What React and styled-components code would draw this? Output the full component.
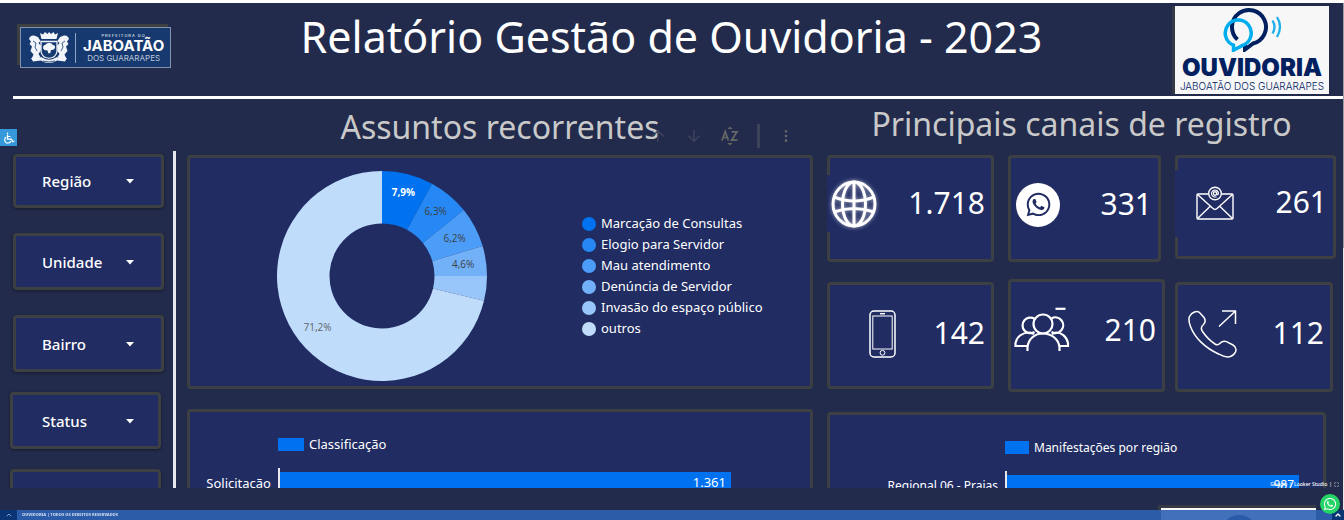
import React from "react"
import styled, { createGlobalStyle } from "styled-components"
import { FaWhatsapp } from "react-icons/fa"
import { ArrowUp, ArrowDown, EllipsisVertical, ChevronUp, Maximize } from "lucide-react"

const slices = [
  { name: "Marcação de Consultas", value: 7.9, color: "#0072f0", label: "7,9%", ink: "#ffffff", reach: 87 },
  { name: "Elogio para Servidor", value: 6.3, color: "#2688f4", label: "6,3%", ink: "#3c4043", reach: 84 },
  { name: "Mau atendimento", value: 6.2, color: "#4c9df7", label: "6,2%", ink: "#3c4043", reach: 82 },
  { name: "Denúncia de Servidor", value: 4.6, color: "#72b0f8", label: "4,6%", ink: "#3c4043", reach: 82 },
  { name: "Invasão do espaço público", value: 3.8, color: "#98c6fa", label: "", ink: "#3c4043", reach: 82 },
  { name: "outros", value: 71.2, color: "#bfdcfb", label: "71,2%", ink: "#5f6468", reach: 82 },
]

const point = (share, radius) => {
  const angle = (share / 100) * Math.PI * 2
  return [106 + radius * Math.sin(angle), 106 - radius * Math.cos(angle)]
}

const slicePath = (from, to) => {
  const large = to - from > 50 ? 1 : 0
  const [ax, ay] = point(from, 105)
  const [bx, by] = point(to, 105)
  const [cx, cy] = point(to, 52.5)
  const [dx, dy] = point(from, 52.5)
  return `M${ax} ${ay}A105 105 0 ${large} 1 ${bx} ${by}L${cx} ${cy}A52.5 52.5 0 ${large} 0 ${dx} ${dy}Z`
}

const Donut = () => {
  let start = 0
  return (
    <DonutSvg viewBox="0 0 212 212" role="img" aria-label="Assuntos recorrentes">
      {slices.map(slice => {
        const from = start
        start += slice.value
        const [x, y] = point(from + slice.value / 2, slice.reach)
        return (
          <g key={slice.name}>
            <path d={slicePath(from, start)} fill={slice.color} />
            <text x={x} y={y + 4} fill={slice.ink} fontWeight={from === 0 ? 700 : 400}>
              {slice.label}
            </text>
          </g>
        )
      })}
    </DonutSvg>
  )
}

const GlobeIcon = () => (
  <Glyph width="48" height="50" viewBox="0 0 48 50" strokeWidth="3" $glow>
    <ellipse cx="24" cy="25" rx="21" ry="22" />
    <ellipse cx="24" cy="25" rx="11.500" ry="22" />
    <path d="M24 3v44M4 18q20 8 40 0M4 33q20-7 40 0" />
  </Glyph>
)

const MailIcon = () => (
  <Glyph width="38" height="34" viewBox="0 0 38 34" strokeWidth="1.4">
    <path d="M12.5 8H2q-1 0-1 1v23q0 1 1 1h34q1 0 1-1V9q0-1-1-1H25.500" />
    <path d="M1.500 8.500L17 22.500q2 1.800 4 0L36.500 8.500M1.500 32.500L14 20.500M36.500 32.500L24 20.500" />
    <circle cx="19" cy="7.500" r="6.300" />
    <circle cx="19" cy="7.500" r="1.700" />
    <path d="M20.700 5.800v2.700q1.800.7 1.800-1.200a3.500 3.500 0 1 0-2 3.400" strokeWidth="1.100" />
  </Glyph>
)

const MobileIcon = () => (
  <Glyph width="27" height="48" viewBox="0 0 27 48" strokeWidth="1.500">
    <rect x="1" y="1" width="25" height="46" rx="4" />
    <rect x="3.800" y="6" width="19.400" height="33" strokeWidth="1" />
    <path d="M11 3.700h5" />
    <circle cx="13.500" cy="42.800" r="2.400" strokeWidth="1" />
  </Glyph>
)

const PeopleIcon = () => (
  <Glyph width="56" height="48" viewBox="0 0 56 48" strokeWidth="2.200">
    <circle cx="29" cy="17" r="9.500" />
    <path d="M20.500 11.800A7.800 7.800 0 1 0 20.500 25M37.500 11.500A7.800 7.800 0 1 1 37.500 25" />
    <path d="M13.500 44v-4c1-8 7-13.500 15.500-13.500S44.500 32 45.500 40v4" />
    <path d="M13.500 39H1.500v-3C3 29 9 25.500 16 25.500l4 1.500M45.500 39h8.500v-3C52.500 29 47 25.500 42 25.500l-4 1.500" />
    <path d="M41.500 1.800h10" />
  </Glyph>
)

const CallIcon = () => (
  <Glyph width="50" height="48" viewBox="0 0 50 48" strokeWidth="1.500">
    <path d="M1.500 6.500C4 2 9 .5 11.500 2.500L16 7.500q2.500 4-.5 7c-2.500 2-3 4-1 7q5.500 8 12.500 12.500c2 1.200 3.500 1 5-.8q3-3 6.500-1.600l6.500 3.400c4 2.500 3.500 6 1.500 8.500-3.500 4.500-9.500 4-15.500.7C17 38 6.500 27.500 2.500 16.500Q0 10 1.500 6.500z" />
    <path d="M31 16.500L47.500 1M34 1h13.500v13" />
  </Glyph>
)

const SortIcon = () => (
  <svg width="18" height="20" viewBox="0 0 18 20" fill="currentColor">
    <path d="M6.500 3L9 .5 11.500 3zM6.500 17L9 19.500 11.500 17z" />
    <path d="M1 14.500L4.200 5.500 7.400 14.500M2.200 11.500h4M10.500 5.800H16L10.500 14.200H16.500" fill="none" stroke="currentColor" strokeWidth="1.700" />
  </svg>
)

const WheelchairIcon = () => (
  <svg width="12" height="12" viewBox="0 0 12 12" fill="none" stroke="#fff" strokeWidth="1.200">
    <circle cx="4.500" cy="1.300" r=".8" fill="#fff" stroke="none" />
    <path d="M4.500 2.500v4.700h4l1.200 2.600 1.800-.8M4.500 4.500h3" />
    <path d="M3.200 5a3.300 3.300 0 1 0 4.800 4" />
  </svg>
)

const Crest = () => (
  <svg width="40" height="32" viewBox="0 0 40 32" fill="#f2f5fa">
    <path d="M11 1l3 1.500L16 0l2.500 2L20 0l2 2L24.500 0l1.500 2.500L29 1l-1.500 6h-15z" />
    <path d="M12 9.500h16v10q-1 6-8 7-7-1-8-7z" fill="none" stroke="#f2f5fa" strokeWidth="1.300" />
    <path d="M14 16q0-3 2.500-3.300 1-2 3.700-1.700 2.500-.3 3.500 1.700 2.800.6 2.300 3.300-1 2.500-4 2l-.7 3.300h-2L18.500 18.500q-4 0-4.500-2.500z" />
    <path d="M0 7q1-4 5-3.500l4 1.500 2.500 4-2 2 2.500 3-.5 5-2 3 2 3-3 2.500-6-.5 2-4.500L1.500 19 3 14.500.5 12 2 9.500z" />
    <path d="M40 7q-1-4-5-3.500L31 5l-2.500 4 2 2-2.500 3 .5 5 2 3-2 3 3 2.500 6-.5-2-4.500 3-3.500L37 14.500l2.500-2.500L38 9.500z" />
    <path d="M2 26q8 1 10-1 8 5 16 0 2 2 10 1l-2 3.500-8-1q-8 5-16 0l-8 1z" />
    <path d="M16 26.500q4 1.500 8 0M14 29q6 2 12 0M4 9l3 2-1 4 2 4M36 9l-3 2 1 4-2 4" fill="none" stroke="#16396f" strokeWidth=".8" />
  </svg>
)

const Balloons = () => (
  <svg width="62" height="46" viewBox="0 0 62 46" fill="none" strokeWidth="4">
    <path d="M16.500 33.500A17 17 0 1 1 32 37.500L24 43.500V38" stroke="#00205f" />
    <path d="M12.500 39.200v5L22 39.200A13 13 0 1 0 12.500 39.200z" stroke="#00aeef" strokeWidth="3.500" />
    <path d="M51.500 14.500q4 6.500 0 13M56 11q6 9.500 0 20" stroke="#1bb0e8" strokeWidth="2.300" />
  </svg>
)

function WhatsBadge() {
  return (
    <Badge>
      <FaWhatsapp size={27} />
    </Badge>
  )
}

const filterGroups = [
  { start: 13, gap: 25, filters: [{ name: "Região", compact: true }, { name: "Unidade" }, { name: "Bairro" }] },
  { start: 10, gap: 20, filters: [{ name: "Status" }, { name: "" }] },
]

const channels = [
  { name: "Site", total: "1.718", icon: <GlobeIcon />, start: 0, end: 14, height: 107, foot: 10, patch: 57 },
  { name: "WhatsApp", total: "331", icon: <WhatsBadge />, start: 5, end: 14, height: 107, foot: 8 },
  { name: "E-mail", total: "261", icon: <MailIcon />, start: 18, end: 0, height: 104, foot: 8, patch: 67 },
  { name: "Aplicativo", total: "142", icon: <MobileIcon />, start: 39, end: 14, height: 107, foot: 4 },
  { name: "Presencial", total: "210", icon: <PeopleIcon />, start: 3, end: 10, height: 113, foot: 10 },
  { name: "Telefone", total: "112", icon: <CallIcon />, start: 10, end: 3, height: 110, foot: 6 },
]

const Filter = ({ name, compact }) => (
  <FilterCard $compact={compact}>
    <FilterSelect aria-label={name || "Filtro"} defaultValue={name}>
      <option>{name}</option>
    </FilterSelect>
    {name && (
      <Caret width="8" height="5" viewBox="0 0 8 5">
        <path d="M0 0h8L4 4.500z" fill="#fff" />
      </Caret>
    )}
  </FilterCard>
)

const App = () => (
  <Page>
    <GlobalStyle />
    <Report>
      <Header>
        <CityLogo>
          <Crest />
          <CityName>
            <small>PREFEITURA DO</small>
            <strong>JABOATÃO</strong>
            <span>DOS GUARARAPES</span>
          </CityName>
        </CityLogo>
        <Title>Relatório Gestão de Ouvidoria - 2023</Title>
        <OfficeLogo>
          <Balloons />
          <strong>OUVIDORIA</strong>
          <span>JABOATÃO DOS GUARARAPES</span>
        </OfficeLogo>
      </Header>
      <Body>
        <Sidebar>
          {filterGroups.map(group => (
            <FilterGroup key={group.start} $start={group.start} $gap={group.gap}>
              {group.filters.map(filter => (
                <Filter key={filter.name} {...filter} />
              ))}
            </FilterGroup>
          ))}
        </Sidebar>
        <Column $grow={626}>
          <Heading>Assuntos recorrentes</Heading>
          <Toolbar>
            <button aria-label="Subir"><ArrowUp size={18} /></button>
            <button aria-label="Descer"><ArrowDown size={18} /></button>
            <ToolStrong aria-label="Ordenar"><SortIcon /></ToolStrong>
            <Separator />
            <ToolStrong aria-label="Mais opções"><EllipsisVertical size={16} /></ToolStrong>
          </Toolbar>
          <DonutCard>
            <Donut />
            <Legend>
              {slices.map(slice => (
                <LegendItem key={slice.name} $color={slice.color}>{slice.name}</LegendItem>
              ))}
            </Legend>
          </DonutCard>
          <BarCard $axis={88}>
            <BarLegend $size={13}>Classificação</BarLegend>
            <BarRow $end={79} $size={13}>
              <span>Solicitação</span>
              <Bar>1.361</Bar>
            </BarRow>
          </BarCard>
        </Column>
        <Column $grow={509}>
          <Heading $raised>Principais canais de registro</Heading>
          <Channels>
            {channels.map(channel => (
              <Channel
                key={channel.name}
                aria-label={channel.name}
                $height={channel.height}
                $end={channel.end}
                $foot={channel.foot}
              >
                <IconSlot $start={channel.start} $patch={channel.patch}>{channel.icon}</IconSlot>
                <Total>{channel.total}</Total>
              </Channel>
            ))}
          </Channels>
          <BarCard $axis={175} $end={10}>
            <BarLegend $size={12}>Manifestações por região</BarLegend>
            <BarRow $end={24} $size={12}>
              <span>Regional 06 - Praias</span>
              <Bar>987</Bar>
            </BarRow>
          </BarCard>
        </Column>
      </Body>
      <Credit>
        <a href="#google">Google</a> | <a href="#looker">Looker Studio</a> | <Maximize size={5} />
      </Credit>
    </Report>
    <NextSection>
      <NextLogo><i /></NextLogo>
    </NextSection>
    <Footer>
      <FooterButton aria-label="Expandir"><ChevronUp size={8} /></FooterButton>
      <span>OUVIDORIA | TODOS OS DIREITOS RESERVADOS</span>
      <TopButton aria-label="Voltar ao topo"><ChevronUp size={8} strokeWidth={4} /></TopButton>
    </Footer>
    <AccessButton aria-label="Acessibilidade"><WheelchairIcon /></AccessButton>
    <ChatLink href="#whatsapp" aria-label="WhatsApp"><FaWhatsapp size={14} /></ChatLink>
    <ScrollEdge />
  </Page>
)

const GlobalStyle = createGlobalStyle`
  * {
    box-sizing: border-box;
  }
  body {
    margin: 0;
    background: #222b4b;
    color: #fff;
    font-family: "Noto Sans", "Open Sans", sans-serif;
  }
  button, select {
    font-family: inherit;
    color: inherit;
    background: none;
    border: 0;
    padding: 0;
  }
`

const Page = styled.div`
  display: flex;
  flex-direction: column;
  height: 100vh;
  overflow: hidden;
  border-top: 3px solid #fff;
`

const Report = styled.main`
  position: relative;
  flex: 1;
  min-height: 0;
  overflow: hidden;
`

const Header = styled.header`
  display: flex;
  justify-content: space-between;
  align-items: flex-start;
  height: 96px;
  margin-left: 13px;
  padding: 3px 15px 0 7px;
  border-bottom: 3px solid #fff;
`

const CityLogo = styled.div`
  display: flex;
  align-items: center;
  width: 151px;
  height: 41px;
  margin-top: 21px;
  padding-left: 8px;
  background: #16396f;
  border: 1px solid #8492ae;
  box-shadow: -3px -3px 0 #3c4043;
`

const CityName = styled.div`
  display: flex;
  flex-direction: column;
  align-items: center;
  margin-left: 6px;
  padding-left: 7px;
  border-left: 1px solid #8fa3c4;
  font-family: Inter, sans-serif;

  small {
    font-size: 4px;
    line-height: 5px;
    letter-spacing: 1px;
  }
  strong {
    font-size: 15px;
    font-weight: 700;
    line-height: 16px;
  }
  span {
    color: #b9c5da;
    font-size: 8px;
    line-height: 9px;
  }
`

const Title = styled.h1`
  margin: 0;
  font-size: 43px;
  font-weight: 400;
  line-height: 62px;
  white-space: nowrap;
`

const OfficeLogo = styled.div`
  display: flex;
  flex-direction: column;
  align-items: center;
  width: 157px;
  height: 88px;
  background: #f7f7f8;
  border-left: 3px solid #353a44;
  color: #00205f;
  font-family: Inter, sans-serif;

  strong {
    margin-top: 3px;
    font-size: 24px;
    font-weight: 900;
    line-height: 26px;
  }
  span {
    font-size: 10px;
    line-height: 10px;
    font-weight: 300;
    white-space: nowrap;
  }
`

const Body = styled.div`
  display: flex;
  padding-right: 8px;
`

const Sidebar = styled.aside`
  display: flex;
  flex-direction: column;
  gap: 20px;
  width: 176px;
  height: 400px;
  margin: 52px 11px 0 0;
  padding-top: 3px;
  border-right: 3px solid #e8e8ec;
`

const FilterGroup = styled.div`
  --inset: ${props => 39 - props.$start}px;
  display: flex;
  flex-direction: column;
  gap: ${props => props.$gap}px;
  padding-left: ${props => props.$start}px;
`

const Card = styled.section`
  background: #202c62;
  border: 3px solid #3c4043;
  border-radius: 4px;
`

const FilterCard = styled(Card)`
  position: relative;
  flex-shrink: 0;
  width: 151px;
  height: ${props => (props.$compact ? 54 : 57)}px;
  box-shadow: 0 1px 3px rgba(0, 0, 0, 0.4);
`

const FilterSelect = styled.select`
  appearance: none;
  width: 100%;
  height: 100%;
  padding-left: var(--inset);
  font-size: 15px;
  font-weight: 500;
`

const Caret = styled.svg`
  position: absolute;
  left: calc(var(--inset) + 84px);
  top: calc(50% - 2px);
  pointer-events: none;
`

const Column = styled.div`
  position: relative;
  flex: ${props => props.$grow} 1 0;
  min-width: 0;

  & + & {
    margin-left: 14px;
  }
`

const Heading = styled.h2`
  height: 56px;
  margin: 0;
  color: #c9c9c9;
  font-size: 32px;
  font-weight: 400;
  line-height: ${props => (props.$raised ? 50 : 56)}px;
  text-align: center;
  white-space: nowrap;
`

const Toolbar = styled.div`
  position: absolute;
  top: 24px;
  right: 19px;
  display: flex;
  align-items: center;
  gap: 18px;
  height: 26px;
  color: #3c445c;

  button {
    display: flex;
  }
`

const ToolStrong = styled.button`
  color: #666767;
`

const Separator = styled.i`
  width: 3px;
  height: 24px;
  background: #3c445c;
`

const DonutCard = styled(Card)`
  display: flex;
  align-items: center;
  height: 234px;
  padding: 8px 0 0 86px;
`

const DonutSvg = styled.svg`
  width: 212px;
  height: 212px;
  overflow: visible;
  font-family: "Open Sans", sans-serif;
  font-size: 10px;
  text-anchor: middle;
`

const Legend = styled.ul`
  margin: 0 0 0 94px;
  padding: 0;
  list-style: none;
`

const LegendItem = styled.li`
  display: flex;
  align-items: center;
  gap: 5px;
  font-size: 13px;
  line-height: 21px;

  &::before {
    content: "";
    width: 14px;
    height: 14px;
    border-radius: 50%;
    background: ${props => props.$color};
  }
`

const BarCard = styled(Card)`
  --axis: ${props => props.$axis}px;
  height: 234px;
  margin: 20px ${props => props.$end || 0}px 0 0;
  padding-top: 23px;
`

const BarLegend = styled.div`
  display: flex;
  align-items: center;
  gap: 5px;
  height: 18px;
  margin-left: var(--axis);
  font-size: ${props => props.$size}px;

  &::before {
    content: "";
    width: 2em;
    height: 13px;
    background: #0072f0;
  }
`

const BarRow = styled.div`
  display: grid;
  grid-template-columns: var(--axis) 1fr;
  margin: 15px ${props => props.$end}px 0 0;
  font-size: ${props => props.$size}px;
  line-height: 22px;

  > span {
    padding: 4px 7px 0 0;
    text-align: right;
  }
`

const Bar = styled.div`
  padding: 3px 5px 3px 0;
  border-left: 2px solid #e8e8ec;
  background: linear-gradient(#0072f0, #0072f0) 0 4px / 100% 24px no-repeat;
  text-align: right;
`

const Channels = styled.div`
  display: grid;
  grid-template-columns: 181fr 167fr 161fr;
  grid-template-rows: 124px 113px;
`

const Channel = styled(Card)`
  display: flex;
  align-items: center;
  justify-content: space-between;
  height: ${props => props.$height}px;
  margin-right: ${props => props.$end}px;
  padding: 0 6px ${props => props.$foot}px 0;

  &:nth-child(4), &:nth-child(6) {
    margin-top: 3px;
  }
`

const IconSlot = styled.div`
  display: flex;
  align-items: center;
  height: ${props => (props.$patch ? `${props.$patch}px` : "auto")};
  margin-left: ${props => (props.$patch ? -3 : 0)}px;
  padding-left: ${props => (props.$patch ? props.$start + 3 : props.$start)}px;
  background: #202c62;
`

const Glyph = styled.svg`
  display: block;
  fill: none;
  stroke: #fff;
  filter: ${props => (props.$glow ? "drop-shadow(0 0 2px rgba(255, 255, 255, 0.6))" : "none")};
`

const Badge = styled.span`
  display: flex;
  align-items: center;
  justify-content: center;
  width: 44px;
  height: 44px;
  border-radius: 50%;
  background: #fff;
  color: #202c62;
`

const Total = styled.span`
  padding-bottom: 3px;
  font-size: 30px;
`

const Credit = styled.div`
  position: absolute;
  right: 5px;
  bottom: 0;
  display: flex;
  align-items: center;
  gap: 2px;
  font-size: 5px;
  font-weight: 500;
  line-height: 7px;

  a {
    color: #fff;
    text-decoration: none;
  }
`

const NextSection = styled.section`
  display: flex;
  justify-content: flex-end;
  height: 32px;
  padding: 17px 28px 0 0;
`

const NextLogo = styled.div`
  display: flex;
  justify-content: center;
  width: 158px;
  border: solid #353a44;
  border-width: 3px 0 0 3px;
  background: #f7f7f8;

  i {
    width: 36px;
    height: 36px;
    margin-top: 7px;
    border-radius: 50%;
    background: #00205f;
  }
`

const Footer = styled.footer`
  position: fixed;
  right: 0;
  bottom: 0;
  left: 0;
  display: flex;
  align-items: center;
  gap: 5px;
  height: 10px;
  background: rgba(45, 96, 179, 0.9);
  color: #c3d3ec;
  font-size: 4px;
  font-weight: 900;
  line-height: 10px;
`

const FooterButton = styled.button`
  display: flex;
  align-items: center;
  justify-content: center;
  width: 17px;
  height: 10px;
  background: #0a3575;
`

const TopButton = styled(FooterButton)`
  width: 12px;
  margin-left: auto;
  color: #fff;
`

const AccessButton = styled.button`
  position: fixed;
  top: 129px;
  left: 0;
  display: flex;
  align-items: center;
  justify-content: center;
  width: 17px;
  height: 17px;
  background: #3498db;
`

const ChatLink = styled.a`
  position: fixed;
  right: 4px;
  bottom: 6px;
  display: flex;
  align-items: center;
  justify-content: center;
  width: 20px;
  height: 20px;
  border-radius: 50%;
  background: #25d366;
  color: #fff;
`

const ScrollEdge = styled.div`
  position: fixed;
  top: 3px;
  right: 0;
  bottom: 10px;
  width: 1px;
  background: linear-gradient(#9a9da8 245px, #e8e8ec 245px);
`

export default App
